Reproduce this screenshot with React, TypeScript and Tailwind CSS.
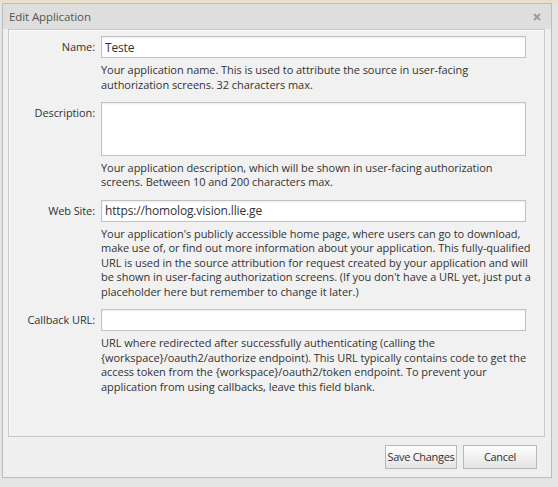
import React from 'react';

const help = 'text-[11px] tracking-[-0.05px] leading-[14.6px] text-[#333] mt-[5px]';
const inputCls =
  'block w-[425px] h-[22px] border border-[#c2c2c2] bg-white px-[3px] text-[12px] tracking-[-0.15px] text-[#333] outline-none shadow-[inset_0_1px_2px_rgba(0,0,0,0.08)]';

function Row({ label, children }: { label: string; children: React.ReactNode }) {
  return (
    <div className="flex">
      <div className="w-[86px] shrink-0 text-right text-[11px] tracking-[-0.1px] leading-[22px] text-[#333]">
        {label}
      </div>
      <div className="ml-[6px] w-[435px]">{children}</div>
    </div>
  );
}

const callbackHelp =
  'URL where redirected after successfully authenticating (calling the {workspace}/oauth2/authorize endpoint). This URL typically contains code to get the access token from the {workspace}/oauth2/token endpoint. To prevent your application from using callbacks, leave this field blank.';

export default function App() {
  return (
    <div className="w-[558px] h-[487px] bg-[#e4e4e4] overflow-hidden font-['Open_Sans',sans-serif]">
      <div className="h-[3px] bg-[#e9e0c9]" />
      <div className="ml-[2px] w-[550px] h-[475px] border border-[#bdbdbd] bg-[#efefef] flex flex-col">
        {/* Title bar */}
        <div className="h-[25px] shrink-0 bg-[#dedede] flex items-center justify-between pl-[6px] pr-[10px]">
          <span className="text-[11.5px] tracking-[-0.1px] text-[#555]">Edit Application</span>
          <svg width="8" height="8" viewBox="0 0 8 8">
            <path d="M1 1 L7 7 M7 1 L1 7" stroke="#9c9c9c" strokeWidth="2" />
          </svg>
        </div>

        {/* Form panel */}
        <div className="ml-[5px] mr-[6px] h-[408px] shrink-0 border border-[#c9c9c9] bg-[#f1f1f1] shadow-[inset_1px_1px_0_#fafafa] pt-[6px] flex flex-col gap-[9.6px]">
          <Row label="Name:">
            <input className={inputCls} defaultValue="Teste" />
            <p className={help}>
              Your application name. This is used to attribute the source in user-facing authorization screens. 32
              characters max.
            </p>
          </Row>
          <Row label="Description:">
            <textarea className={inputCls + ' h-[54px] resize-none'} defaultValue="" />
            <p className={help}>
              Your application description, which will be shown in user-facing authorization screens. Between 10 and
              200 characters max.
            </p>
          </Row>
          <Row label="Web Site:">
            <input className={inputCls} defaultValue="https://homolog.vision.llie.ge" />
            <p className={help}>
              Your application's publicly accessible home page, where users can go to download, make use of, or find
              out more information about your application. This fully-qualified URL is used in the source attribution
              for request created by your application and will be shown in user-facing authorization screens. (If you
              don't have a URL yet, just put a placeholder here but remember to change it later.)
            </p>
          </Row>
          <Row label="Callback URL:">
            <input className={inputCls} defaultValue="" />
            <p className={help}>{callbackHelp}</p>
          </Row>
        </div>

        {/* Footer */}
        <div className="flex justify-end gap-[6px] mt-[8px] mr-[14px]">
          <button className="w-[72px] h-[24px] px-0 whitespace-nowrap border border-[#b8b8b8] bg-gradient-to-b from-[#fdfdfd] to-[#e4e4e4] text-[11px] tracking-[-0.3px] text-[#333]">
            Save Changes
          </button>
          <button className="w-[74px] h-[24px] px-0 whitespace-nowrap border border-[#b8b8b8] bg-gradient-to-b from-[#fdfdfd] to-[#e4e4e4] text-[11px] tracking-[-0.3px] text-[#333]">
            Cancel
          </button>
        </div>
      </div>
    </div>
  );
}
